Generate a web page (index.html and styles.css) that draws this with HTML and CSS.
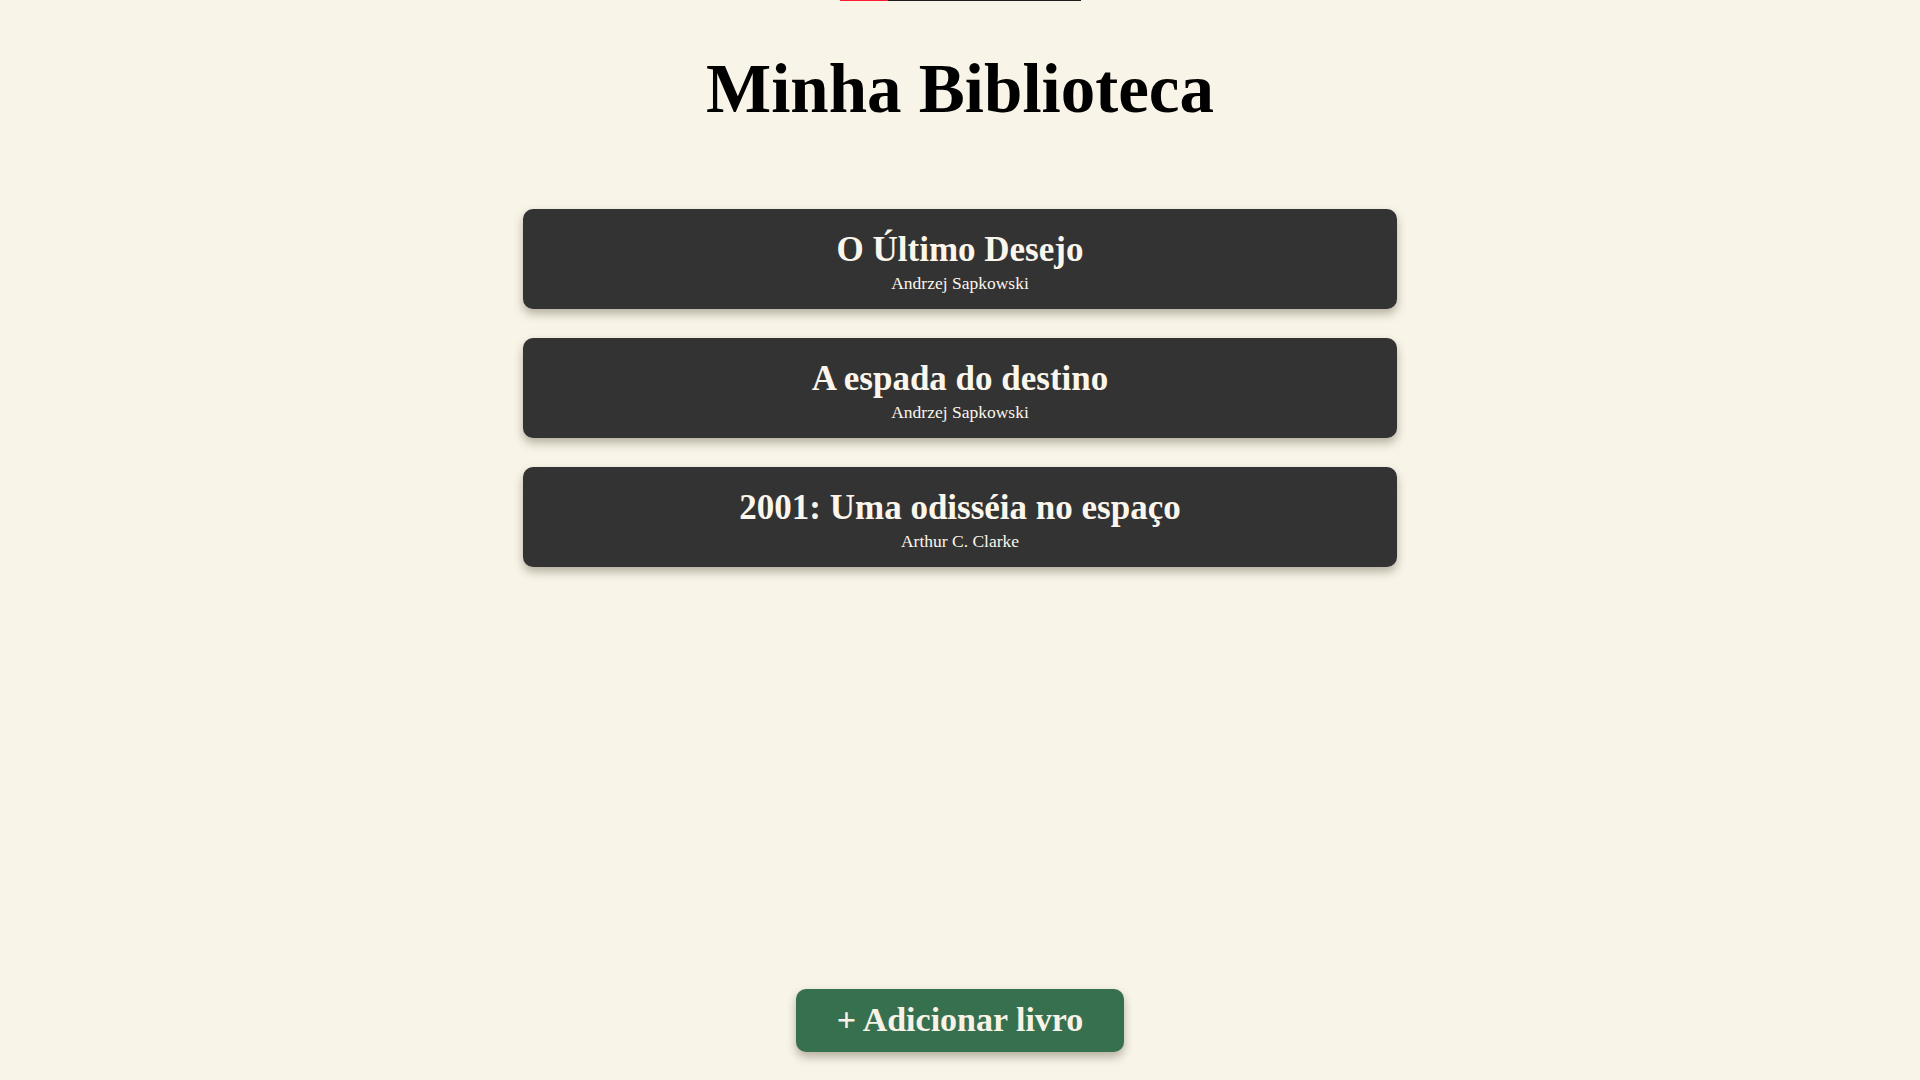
FILE: index.html
```html
<!DOCTYPE html>
<html lang="pt-BR">
<head>
<meta charset="utf-8">
<title>Minha Biblioteca</title>
<link rel="stylesheet" href="styles.css">
</head>
<body>
<div class="page">
  <div class="topline"><span class="topline-red"></span></div>
  <h1 class="title">Minha Biblioteca</h1>
  <ul class="books">
    <li class="book">
      <h2 class="book-title">O Último Desejo</h2>
      <p class="book-author">Andrzej Sapkowski</p>
    </li>
    <li class="book">
      <h2 class="book-title">A espada do destino</h2>
      <p class="book-author">Andrzej Sapkowski</p>
    </li>
    <li class="book">
      <h2 class="book-title">2001: Uma odisséia no espaço</h2>
      <p class="book-author">Arthur C. Clarke</p>
    </li>
  </ul>
  <button class="add-btn">+ Adicionar livro</button>
</div>
</body>
</html>
```

FILE: styles.css
```css
html, body {
  margin: 0;
  padding: 0;
  background: #f8f4e8;
}

body {
  font-family: "Liberation Serif", "Times New Roman", serif;
  color: #000;
}

.page {
  min-height: 100vh;
  box-sizing: border-box;
  display: flex;
  flex-direction: column;
  align-items: center;
  padding-bottom: 28px;
}

.topline {
  width: 241px;
  height: 1px;
  background: #1e1e1e;
  display: flex;
}

.topline-red {
  width: 48px;
  height: 1px;
  background: #ff1a2e;
}

.title {
  margin: 48px 0 0;
  font-size: 69px;
  line-height: 80px;
  font-weight: 700;
  text-align: center;
}

.books {
  list-style: none;
  margin: 80px 0 0;
  padding: 0;
  display: flex;
  flex-direction: column;
  gap: 29px;
  width: 874px;
}

.book {
  box-sizing: border-box;
  height: 100px;
  background: #333333;
  border-radius: 10px;
  box-shadow: 0 5px 10px rgba(60, 50, 30, 0.35);
  padding-top: 21px;
  text-align: center;
  color: #fbf6ec;
}

.book-title {
  margin: 0;
  font-size: 35px;
  line-height: 40px;
  font-weight: 700;
}

.book-author {
  margin: 3px 0 0;
  font-size: 17.5px;
  line-height: 20px;
}

.add-btn {
  margin-top: auto;
  box-sizing: border-box;
  width: 328px;
  height: 63px;
  padding: 11px 0 12px;
  border: none;
  border-radius: 10px;
  background: #37704f;
  color: #f8f3e6;
  font-family: "Liberation Serif", "Times New Roman", serif;
  font-size: 34px;
  line-height: 40px;
  font-weight: 700;
  box-shadow: 0 5px 10px rgba(60, 50, 30, 0.35);
  cursor: pointer;
}
```
